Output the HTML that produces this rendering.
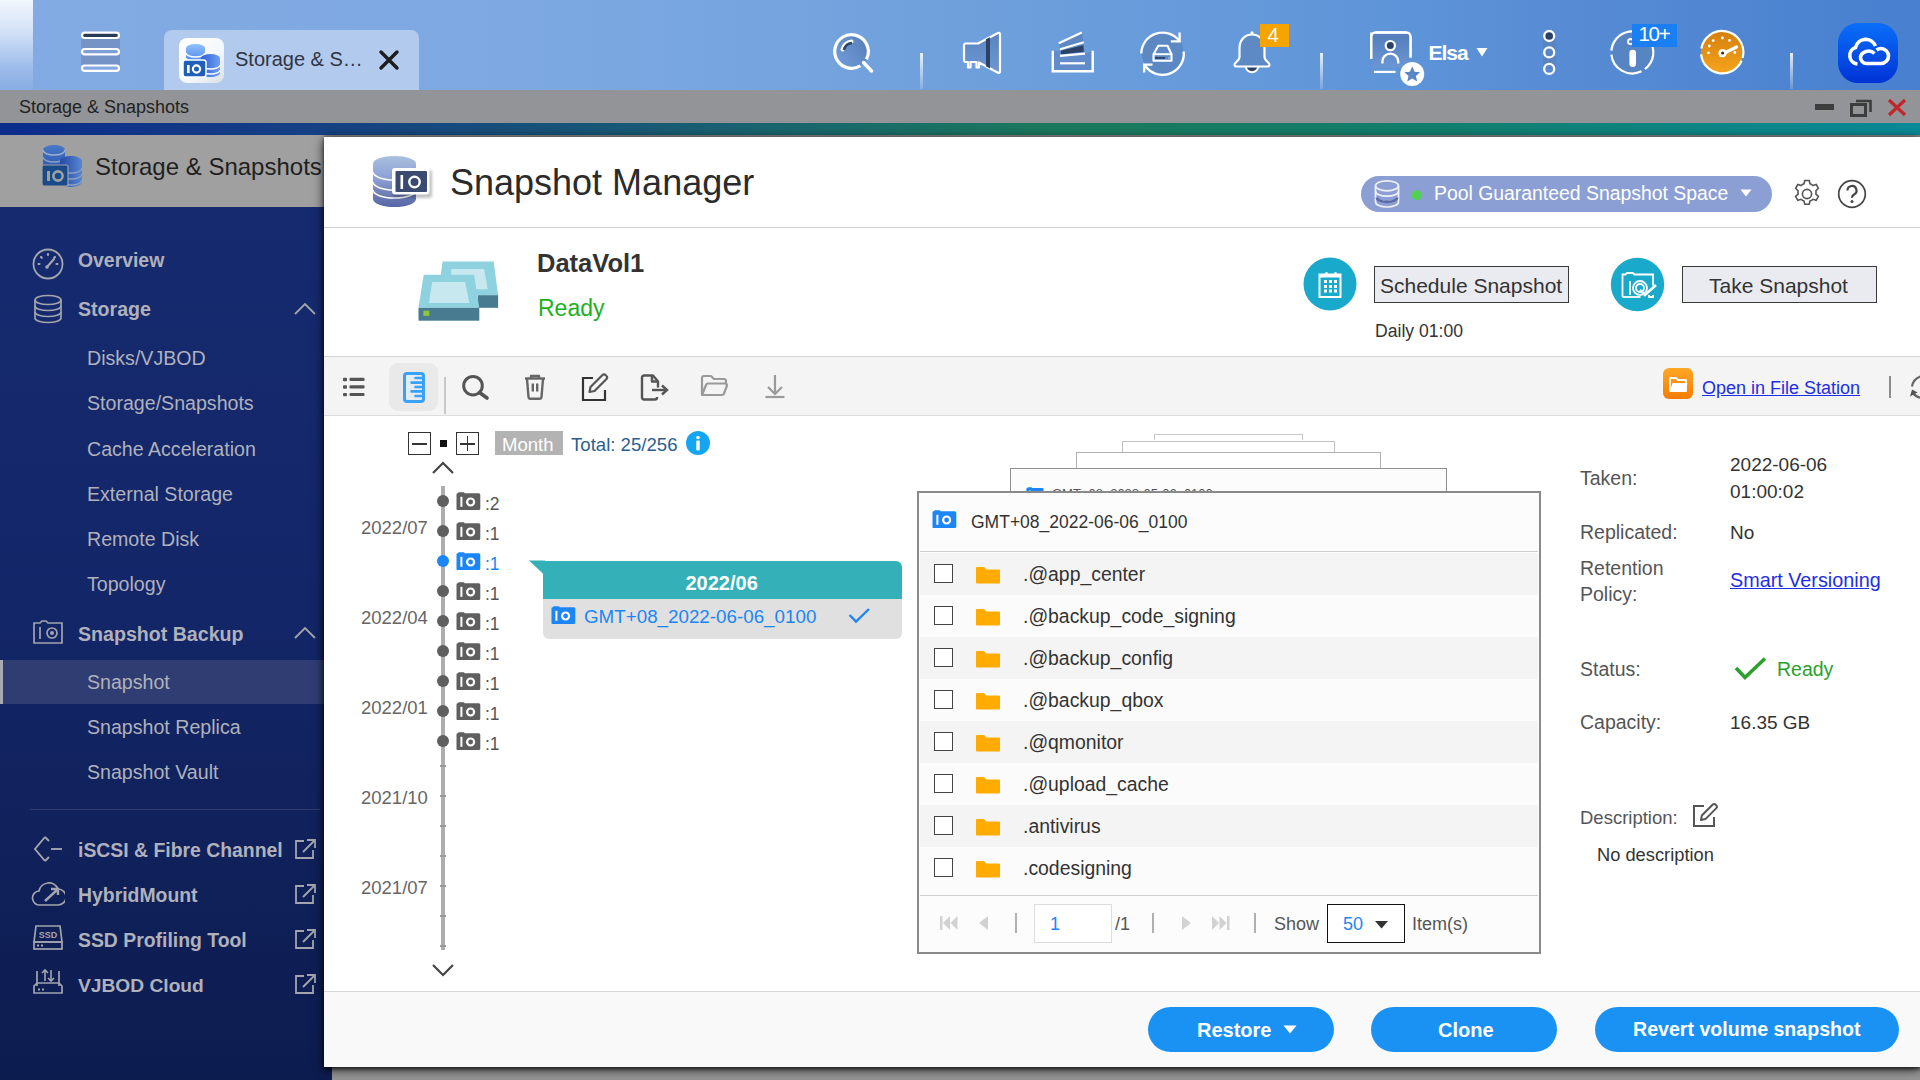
<!DOCTYPE html><html><head><meta charset="utf-8"><style>*{box-sizing:border-box;margin:0;padding:0}
html,body{width:1920px;height:1080px;overflow:hidden}
body{position:relative;background:#959595;font-family:"Liberation Sans",sans-serif;color:#333}
.a{position:absolute;display:block}
.t{position:absolute;white-space:nowrap;line-height:1}
</style></head><body>
<div class="a" style="left:0px;top:0px;width:1920px;height:90px;background:linear-gradient(90deg,#83aae3 0%,#7ca8e1 30%,#6fa0dc 50%,#6096d9 70%,#5489d3 85%,#4880cf 100%)"></div>
<div class="a" style="left:0px;top:0px;width:33px;height:90px;background:linear-gradient(180deg,#f2f6fd 0%,#d3e1f6 35%,#9dbcea 75%,#88ade4 100%)"></div>
<div class="a" style="left:0px;top:90px;width:1920px;height:33px;background:#929497"></div>
<div class="a" style="left:0px;top:123px;width:1920px;height:12px;background:linear-gradient(90deg,#0c2c8c 0%,#164383 18%,#1a6570 40%,#1b7a5c 55%,#12806f 75%,#0a8a98 100%)"></div>
<div class="a" style="left:0px;top:135px;width:324px;height:72px;background:#a0a0a0"></div>
<div class="a" style="left:324px;top:135px;width:1596px;height:2px;background:#8a8a8a"></div>
<div class="a" style="left:0px;top:207px;width:332px;height:873px;background:linear-gradient(180deg,#162a6f 0%,#132668 45%,#0d1c4f 100%)"></div>
<svg class="a" style="left:78px;top:28px;" width="46" height="48" viewBox="0 0 46 48">
<rect x="3" y="11" width="39" height="26" fill="#7390c2" opacity=".9"/>
<rect x="4" y="4.6" width="37" height="5.4" rx="2.7" fill="#2b3a58" stroke="#fff" stroke-width="2.2"/>
<rect x="4" y="21" width="37" height="5.4" rx="2.7" fill="#7d9fd6" stroke="#fff" stroke-width="2.2"/>
<rect x="4" y="37.5" width="37" height="5.4" rx="2.7" fill="#84a8e0" stroke="#fff" stroke-width="2.2"/>
</svg>
<div class="a" style="left:164px;top:30px;width:255px;height:60px;background:#b2caee;border-radius:8px 8px 0 0"></div>
<div class="a" style="left:179px;top:38px;width:45px;height:45px;background:linear-gradient(135deg,#ffffff 0%,#f4f7fb 60%,#d9e0e8 100%);border-radius:8px"></div>
<svg class="a" style="left:179px;top:38px;" width="45" height="45" viewBox="0 0 45 45">
<defs><linearGradient id="cy1" x1="0" y1="0" x2="0" y2="1"><stop offset="0" stop-color="#8fc0ff"/><stop offset="1" stop-color="#2f6fe0"/></linearGradient>
<linearGradient id="cy2" x1="0" y1="0" x2="1" y2="0"><stop offset="0" stop-color="#2e5fd8"/><stop offset="1" stop-color="#6fa0f0"/></linearGradient></defs>
<path d="M7 10 a9.5 4 0 0 1 19 0 v18 a9.5 4 0 0 1 -19 0z" fill="url(#cy1)"/>
<path d="M7 15 a9.5 4 0 0 0 19 0 M7 20 a9.5 4 0 0 0 19 0" stroke="#fff" stroke-width="1.5" fill="none"/>
<path d="M22 20 a9.5 4 0 0 1 19 0 v15 a9.5 4 0 0 1 -19 0z" fill="url(#cy2)"/>
<path d="M22 27 a9.5 4 0 0 0 19 0 M22 32 a9.5 4 0 0 0 19 0" stroke="#fff" stroke-width="1.3" fill="none"/>
<rect x="4" y="22" width="23" height="17" rx="2.5" fill="#1f5fb8" stroke="#fff" stroke-width="1.5"/>
<rect x="8" y="27" width="2.6" height="8" fill="#fff"/><circle cx="17.5" cy="31" r="3.6" fill="none" stroke="#fff" stroke-width="2.2"/>
</svg>
<div class="t" style="left:235.0px;top:48.5px;font-size:20px;color:#2f3540;font-weight:400;letter-spacing:0px">Storage &amp; S&hellip;</div>
<svg class="a" style="left:378px;top:49px;" width="22" height="22" viewBox="0 0 22 22"><path d="M3 3 L19 19 M19 3 L3 19" stroke="#1c1c1c" stroke-width="3.4" stroke-linecap="round"/></svg>
<svg class="a" style="left:828px;top:28px;" width="50" height="50" viewBox="0 0 50 50">
<defs><linearGradient id="sg" x1="0" y1="0" x2="0" y2="1"><stop offset="0" stop-color="#5a82bd"/><stop offset="1" stop-color="#6f9ad6"/></linearGradient></defs>
<circle cx="23.5" cy="23.5" r="16.8" fill="url(#sg)" stroke="#fff" stroke-width="3.2" stroke-dasharray="96 9.6" transform="rotate(58 23.5 23.5)"/>
<path d="M14.5 21.5 a10 10 0 0 1 9 -8" stroke="#fff" stroke-width="4" fill="none" stroke-linecap="round"/>
<path d="M16 22 a9 9 0 0 1 8 -7" stroke="#2d4365" stroke-width="2.6" fill="none"/>
<path d="M35.5 34.5 L43.5 43" stroke="#fff" stroke-width="3.4" stroke-linecap="round"/>
</svg>
<div class="a" style="left:919.5px;top:53px;width:3.0px;height:36px;background:linear-gradient(180deg,rgba(255,255,255,.85),rgba(255,255,255,.15))"></div>
<div class="a" style="left:1319.5px;top:53px;width:3.0px;height:36px;background:linear-gradient(180deg,rgba(255,255,255,.85),rgba(255,255,255,.15))"></div>
<div class="a" style="left:1789.5px;top:53px;width:3.0px;height:36px;background:linear-gradient(180deg,rgba(255,255,255,.85),rgba(255,255,255,.15))"></div>
<svg class="a" style="left:958px;top:28px;" width="48" height="50" viewBox="0 0 48 50">
<defs><linearGradient id="mg" x1="0" y1="0" x2="0" y2="1"><stop offset="0" stop-color="#5a84c0"/><stop offset="1" stop-color="#6d98d4"/></linearGradient></defs>
<path d="M8 15.5 h12 L40 5 a1.3 1.3 0 0 1 2 1.2 V43.5 a1.3 1.3 0 0 1 -2 1.2 L21 34.5 V39.5 H18.5 V34 H12.5 V39.5 H10 V34 H8 a2 2 0 0 1 -2 -2 V17.5 a2 2 0 0 1 2 -2z" fill="url(#mg)" stroke="#fff" stroke-width="2.2" stroke-linejoin="round"/>
<path d="M28 11.3 L32 9.2 V40.4 L28 38.3z" fill="#2b4165"/>
</svg>
<svg class="a" style="left:1048px;top:28px;" width="50" height="50" viewBox="0 0 50 50">
<path d="M13 22 L35.5 15 L37 25.5 L45 23 V43 H5 V23 L13 23z" fill="#5f8ac6" opacity=".85"/>
<path d="M11 15.5 L34 5 L35.5 14.5 L12 21.2z" fill="#5d88c4"/>
<path d="M4.8 22.8 V43.2 H44.7 V22.8" fill="none" stroke="#fff" stroke-width="2.4"/>
<path d="M12 35.3 H37" stroke="#fff" stroke-width="2.2"/>
<path d="M10.8 15.3 L33.8 4.5" stroke="#fff" stroke-width="2.2"/>
<path d="M12 21.3 L35.8 14.3" stroke="#fff" stroke-width="2.2"/>
<path d="M12.8 22.8 L35.3 17.3 L35.8 23.7 L13.2 26.3z" fill="#2b4165"/>
<path d="M12 27.8 L37 25.6" stroke="#fff" stroke-width="2.2"/>
</svg>
<svg class="a" style="left:1134px;top:28px;" width="56" height="50" viewBox="0 0 56 50">
<circle cx="28.5" cy="24.3" r="21" fill="#5c88c4"/>
<path d="M7.3 25.5 A21.2 21.2 0 0 1 45.6 13.3" fill="none" stroke="#fff" stroke-width="2.3"/>
<path d="M49.7 23.5 A21.2 21.2 0 0 1 11 37.5" fill="none" stroke="#fff" stroke-width="2.3"/>
<path d="M45.6 4.5 V13.3 H36.8" fill="none" stroke="#fff" stroke-width="2.3"/>
<path d="M10.2 44.5 V36.6 H18.5" fill="none" stroke="#fff" stroke-width="2.3"/>
<path d="M24.3 17.8 H33.5 L37.5 26.2 V32.8 H19.5 V26.2z" fill="none" stroke="#fff" stroke-width="2.1" stroke-linejoin="round"/>
<path d="M19.5 26.2 H37.5" stroke="#fff" stroke-width="2"/>
<rect x="21" y="29" width="10" height="1.8" fill="#2b4165"/><rect x="34" y="29" width="1.6" height="1.8" fill="#8fb0e0"/>
</svg>
<svg class="a" style="left:1228px;top:28px;" width="48" height="50" viewBox="0 0 48 50">
<path d="M17.8 38.5 a6.2 5.8 0 0 0 12.4 0" fill="#2b4165" stroke="#fff" stroke-width="2"/>
<path d="M11.5 20 c0 -8 5.5 -13.5 12.5 -13.5 c7 0 12.5 5.5 12.5 13.5 v9 c0 3 3.5 5 4.5 6.5 c1 1.5 .5 3 -1.5 3 h-31 c-2 0 -2.5 -1.5 -1.5 -3 c1 -1.5 4.5 -3.5 4.5 -6.5z" fill="#5d89c5" stroke="#fff" stroke-width="2.2" stroke-linejoin="round"/>
<circle cx="24" cy="4.8" r="1.6" fill="#fff"/>
</svg>
<div class="a" style="left:1260px;top:24px;width:29px;height:23px;background:#f6a400"></div>
<div class="t" style="left:1267.5px;top:24.6px;font-size:20.5px;color:#fff;font-weight:400;">4</div>
<svg class="a" style="left:1366px;top:28px;" width="62" height="62" viewBox="0 0 62 62">
<defs><linearGradient id="ug" x1="0" y1="0" x2="0" y2="1"><stop offset="0" stop-color="#557fbc"/><stop offset="1" stop-color="#6b97d4"/></linearGradient></defs>
<path d="M5.3 30.8 V8.5 a4 4 0 0 1 4 -4 H40.5 a4 4 0 0 1 4 4 V29.5" fill="url(#ug)" stroke="#fff" stroke-width="2.3"/>
<rect x="6.4" y="8" width="37" height="32" fill="url(#ug)"/>
<path d="M5.3 4.5 V30.8 M44.5 8 V29.5" stroke="#fff" stroke-width="2.3"/>
<path d="M9.5 4.5 H40.5" stroke="#fff" stroke-width="2.3"/>
<circle cx="24.3" cy="17.6" r="4.6" fill="#2b4165" stroke="#fff" stroke-width="2.2"/>
<path d="M16.4 35.5 v-2 a7.9 7.9 0 0 1 15.8 0 v2" fill="none" stroke="#fff" stroke-width="2.3"/>
<path d="M8 43.9 H29.6" stroke="#fff" stroke-width="2.2"/>
<circle cx="46.2" cy="46.1" r="12" fill="#fff"/>
<path d="M46.2 38.5 l2.4 5.2 5.5 .5 -4.2 3.7 1.3 5.5 -5 -3 -5 3 1.3 -5.5 -4.2 -3.7 5.5 -.5z" fill="#5a86c4"/>
</svg>
<div class="t" style="left:1428.5px;top:42.2px;font-size:21px;color:#fff;font-weight:700;letter-spacing:-1px">Elsa</div>
<svg class="a" style="left:1476px;top:47px;" width="12" height="10" viewBox="0 0 12 10"><path d="M0.5 1 h11 l-5.5 8.5z" fill="#fff"/></svg>
<div class="a" style="left:1543px;top:36px;width:13px;height:33px;background:#5985c2"></div>
<svg class="a" style="left:1539px;top:26px;" width="21" height="54" viewBox="0 0 21 54">
<circle cx="10.2" cy="10" r="5" fill="#2b4165" stroke="#fff" stroke-width="2.3"/>
<circle cx="10.2" cy="26.4" r="5" fill="#5a86c3" stroke="#fff" stroke-width="2.3"/>
<circle cx="10.2" cy="42.9" r="5" fill="none" stroke="#fff" stroke-width="2.3"/>
</svg>
<svg class="a" style="left:1606px;top:26px;" width="52" height="52" viewBox="0 0 52 52">
<circle cx="26.3" cy="26.4" r="21" fill="#5784c2"/>
<circle cx="26.3" cy="26.4" r="21" fill="none" stroke="#fff" stroke-width="2.2" stroke-dasharray="30 4 40 4 40 4 40"  transform="rotate(-150 26.3 26.4)"/>
<circle cx="24.6" cy="15.6" r="2.6" fill="none" stroke="#fff" stroke-width="1.8"/>
<rect x="23.4" y="23.7" width="6.6" height="17.4" rx="3.3" fill="#fff"/>
</svg>
<div class="a" style="left:1632px;top:24px;width:45px;height:23px;background:#1a7ff2"></div>
<div class="t" style="left:1638.5px;top:24.4px;font-size:20.5px;color:#fff;font-weight:400;letter-spacing:-1.3px">10+</div>
<svg class="a" style="left:1697px;top:27px;" width="52" height="52" viewBox="0 0 52 52">
<defs><linearGradient id="gg" x1="0" y1="0" x2="0" y2="1"><stop offset="0" stop-color="#d4800e"/><stop offset="1" stop-color="#f6a31c"/></linearGradient></defs>
<circle cx="25.2" cy="25.2" r="21.2" fill="url(#gg)"/>
<circle cx="25.2" cy="25.2" r="21.2" fill="none" stroke="#fff" stroke-width="2.2" stroke-dasharray="68.4 3 55.1 6.7" transform="rotate(-170 25.2 25.2)"/>
<path d="M23.5 28 L39.5 20" stroke="#fff" stroke-width="3.2" stroke-linecap="round"/>
<circle cx="25.6" cy="26.1" r="4.2" fill="#fff"/><circle cx="25.6" cy="26.1" r="1.5" fill="#3a2a10"/>
<g fill="#fff"><circle cx="11.5" cy="25.8" r="1.4"/><circle cx="12.3" cy="19" r="1.4"/><circle cx="16.2" cy="13.6" r="1.4"/><circle cx="25.4" cy="11" r="1.4"/><circle cx="32.5" cy="13.4" r="1.4"/><circle cx="37.8" cy="25.5" r="1.4"/></g>
</svg>
<div class="a" style="left:1838px;top:23px;width:60px;height:60px;background:linear-gradient(180deg,#0a6ff9,#0033d6);border-radius:20px"></div>
<svg class="a" style="left:1838px;top:23px;" width="60" height="59" viewBox="0 0 60 59">
<path d="M19.5 41 a8.5 8.5 0 0 1 -2 -16.5 a10.5 10.5 0 0 1 20 -1.5" fill="none" stroke="#fff" stroke-width="3.6"/>
<path d="M36.5 30.5 a8 7 0 0 0 -14 4 a6 6 0 0 0 6 6 h14.5 a7.5 7.5 0 0 0 0 -15 a7.5 7.5 0 0 0 -4.5 1.5" fill="none" stroke="#fff" stroke-width="3.6"/>
</svg>
<div class="t" style="left:19.0px;top:97.7px;font-size:18px;color:#222;font-weight:400;">Storage &amp; Snapshots</div>
<div class="a" style="left:1815px;top:104px;width:19px;height:6px;background:#3d3d3d"></div>
<svg class="a" style="left:1850px;top:98px;" width="23" height="19" viewBox="0 0 23 19"><rect x="1.5" y="6.5" width="14" height="11" fill="none" stroke="#3d3d3d" stroke-width="3"/><path d="M6 3 h14.5 v11" fill="none" stroke="#3d3d3d" stroke-width="2.6"/></svg>
<svg class="a" style="left:1886px;top:98px;" width="22" height="19" viewBox="0 0 22 19"><path d="M3 2 L19 17 M19 2 L3 17" stroke="#c0272d" stroke-width="3.2"/></svg>
<svg class="a" style="left:40px;top:142px;" width="46" height="46" viewBox="0 0 46 46">
<defs><linearGradient id="sb1" x1="0" y1="0" x2="0" y2="1"><stop offset="0" stop-color="#4a78c8"/><stop offset="1" stop-color="#1f4fa8"/></linearGradient>
<linearGradient id="sb2" x1="0" y1="0" x2="1" y2="0"><stop offset="0" stop-color="#2348a8"/><stop offset="1" stop-color="#5a86d0"/></linearGradient></defs>
<path d="M3 8 a11 5 0 0 1 22 0 v22 a11 5 0 0 1 -22 0z" fill="url(#sb1)"/>
<path d="M3 8 a11 5 0 0 0 22 0" fill="none" stroke="#9fb3cf" stroke-width="1.4"/>
<path d="M3 15 a11 5 0 0 0 22 0" fill="none" stroke="#8aa0c0" stroke-width="1.4"/>
<path d="M20 19 a11 5 0 0 1 22 0 v21 a11 5 0 0 1 -22 0z" fill="url(#sb2)"/>
<path d="M20 26 a11 5 0 0 0 22 0 M20 32 a11 5 0 0 0 22 0 M20 38 a11 5 0 0 0 22 0" fill="none" stroke="#8aa0c0" stroke-width="1.3"/>
<rect x="2" y="23" width="26" height="21" rx="2" fill="#184a8a" stroke="#a0a0a0" stroke-width="1.2"/>
<rect x="7" y="29" width="3" height="10" fill="#a0a0a0"/><circle cx="18" cy="34" r="4.6" fill="none" stroke="#a0a0a0" stroke-width="2.6"/>
</svg>
<div class="t" style="left:95.0px;top:154.6px;font-size:24px;color:#1f1f1f;font-weight:400;">Storage &amp; Snapshots</div>
<div class="t" style="left:78.0px;top:250.5px;font-size:19.4px;color:#afb1bb;font-weight:700;">Overview</div>
<svg class="a" style="left:31px;top:247px;" width="34" height="34" viewBox="0 0 34 34"><circle cx="17" cy="17" r="14.5" fill="none" stroke="#a3a5ad" stroke-width="1.8"/>
<g stroke="#a3a5ad" stroke-width="2.2" stroke-linecap="round"><path d="M7.5 17 h1 M10 10 l.8 .8 M17 7 v1 M24 10 l-.8 .8 M26.5 17 h-1"/><path d="M16 20 L23 12"/></g><circle cx="16" cy="20" r="1.8" fill="#a3a5ad"/></svg>
<div class="t" style="left:78.0px;top:300.3px;font-size:19.6px;color:#afb1bb;font-weight:700;">Storage</div>
<svg class="a" style="left:31px;top:293px;" width="34" height="32" viewBox="0 0 34 32"><g fill="none" stroke="#a3a5ad" stroke-width="1.7"><ellipse cx="17" cy="7" rx="13" ry="4.5"/><path d="M4 7 v18 a13 4.5 0 0 0 26 0 v-18"/><path d="M4 13 a13 4.5 0 0 0 26 0 M4 19 a13 4.5 0 0 0 26 0"/></g></svg>
<svg class="a" style="left:293px;top:301px;" width="24" height="16" viewBox="0 0 24 16"><path d="M2 13 L12 3 L22 13" fill="none" stroke="#a3a5ad" stroke-width="1.8"/></svg>
<div class="t" style="left:87.0px;top:349.1px;font-size:19.6px;color:#afb1bb;font-weight:400;">Disks/VJBOD</div>
<div class="t" style="left:87.0px;top:394.3px;font-size:19.6px;color:#afb1bb;font-weight:400;">Storage/Snapshots</div>
<div class="t" style="left:87.0px;top:439.5px;font-size:19.6px;color:#afb1bb;font-weight:400;">Cache Acceleration</div>
<div class="t" style="left:87.0px;top:484.7px;font-size:19.6px;color:#afb1bb;font-weight:400;">External Storage</div>
<div class="t" style="left:87.0px;top:529.9px;font-size:19.6px;color:#afb1bb;font-weight:400;">Remote Disk</div>
<div class="t" style="left:87.0px;top:575.1px;font-size:19.6px;color:#afb1bb;font-weight:400;">Topology</div>
<div class="t" style="left:78.0px;top:625.3px;font-size:19.6px;color:#afb1bb;font-weight:700;">Snapshot Backup</div>
<svg class="a" style="left:31px;top:619px;" width="34" height="28" viewBox="0 0 34 28"><g fill="none" stroke="#a3a5ad" stroke-width="1.7"><path d="M3 4 h6 l2 -2 h4 l2 2 h14 v20 h-28z"/><path d="M9 8 v12"/><circle cx="21" cy="14" r="5"/></g><circle cx="21" cy="14" r="2" fill="#a3a5ad"/></svg>
<svg class="a" style="left:293px;top:625px;" width="24" height="16" viewBox="0 0 24 16"><path d="M2 13 L12 3 L22 13" fill="none" stroke="#a3a5ad" stroke-width="1.8"/></svg>
<div class="a" style="left:0px;top:660px;width:324px;height:44px;background:#2f3d72"></div>
<div class="a" style="left:0px;top:660px;width:3px;height:44px;background:#a9abb3"></div>
<div class="t" style="left:87.0px;top:673.1px;font-size:19.6px;color:#afb1bb;font-weight:400;">Snapshot</div>
<div class="t" style="left:87.0px;top:718.1px;font-size:19.6px;color:#afb1bb;font-weight:400;">Snapshot Replica</div>
<div class="t" style="left:87.0px;top:763.1px;font-size:19.6px;color:#afb1bb;font-weight:400;">Snapshot Vault</div>
<div class="a" style="left:30px;top:809px;width:290px;height:1px;background:#2e3c6c"></div>
<div class="t" style="left:78.0px;top:840.5px;font-size:19.4px;color:#afb1bb;font-weight:700;">iSCSI &amp; Fibre Channel</div>
<svg class="a" style="left:31px;top:833px;" width="34" height="32" viewBox="0 0 34 32"><g fill="none" stroke="#a3a5ad" stroke-width="1.9"><path d="M14 4 L4 16 L14 28"/><path d="M14 4 l4 4 M14 28 l4 -4"/><path d="M20 16 h11"/></g></svg>
<div class="t" style="left:78.0px;top:885.5px;font-size:19.4px;color:#afb1bb;font-weight:700;">HybridMount</div>
<svg class="a" style="left:31px;top:879px;" width="34" height="30" viewBox="0 0 34 30"><g fill="none" stroke="#a3a5ad" stroke-width="1.7"><path d="M9 26 a7 7 0 0 1 -1 -14 a10 10 0 0 1 19 -2 a8 8 0 0 1 0 16z"/></g><path d="M14 22 L26 11 M20 10 h7 v6" stroke="#a3a5ad" stroke-width="2.4" fill="none"/></svg>
<div class="t" style="left:78.0px;top:930.5px;font-size:19.4px;color:#afb1bb;font-weight:700;">SSD Profiling Tool</div>
<svg class="a" style="left:31px;top:923px;" width="34" height="30" viewBox="0 0 34 30"><g fill="none" stroke="#a3a5ad" stroke-width="1.7"><path d="M5 3 h24 l2 16 h-28z"/><rect x="3" y="19" width="28" height="7"/></g><text x="17" y="15" font-size="9" font-family="Liberation Sans" font-weight="700" fill="#a3a5ad" text-anchor="middle">SSD</text><g fill="#a3a5ad"><rect x="6" y="21.5" width="2" height="2"/><rect x="10" y="21.5" width="2" height="2"/></g></svg>
<div class="t" style="left:78.0px;top:975.7px;font-size:19.2px;color:#afb1bb;font-weight:700;">VJBOD Cloud</div>
<svg class="a" style="left:31px;top:967px;" width="34" height="30" viewBox="0 0 34 30"><g fill="none" stroke="#a3a5ad" stroke-width="1.7"><path d="M6 4 v15 M28 4 v15 M3 19 l3 -3 h22 l3 3 v7 h-28z"/></g><path d="M14 3 v11 M11 6 l3 -3 3 3 M20 14 v-11 M17 11 l3 3 3 -3" stroke="#a3a5ad" stroke-width="1.6" fill="none"/><g fill="#a3a5ad"><rect x="7" y="21.5" width="2" height="2"/><rect x="11" y="21.5" width="2" height="2"/></g></svg>
<svg class="a" style="left:294px;top:838px;" width="24" height="22" viewBox="0 0 24 22"><g fill="none" stroke="#a3a5ad" stroke-width="1.8"><path d="M10 3 h-8 v17 h17 v-8"/><path d="M13 2 h8 v8 M21 2 L9 14"/></g></svg>
<svg class="a" style="left:294px;top:883px;" width="24" height="22" viewBox="0 0 24 22"><g fill="none" stroke="#a3a5ad" stroke-width="1.8"><path d="M10 3 h-8 v17 h17 v-8"/><path d="M13 2 h8 v8 M21 2 L9 14"/></g></svg>
<svg class="a" style="left:294px;top:928px;" width="24" height="22" viewBox="0 0 24 22"><g fill="none" stroke="#a3a5ad" stroke-width="1.8"><path d="M10 3 h-8 v17 h17 v-8"/><path d="M13 2 h8 v8 M21 2 L9 14"/></g></svg>
<svg class="a" style="left:294px;top:973px;" width="24" height="22" viewBox="0 0 24 22"><g fill="none" stroke="#a3a5ad" stroke-width="1.8"><path d="M10 3 h-8 v17 h17 v-8"/><path d="M13 2 h8 v8 M21 2 L9 14"/></g></svg>
<div class="a" style="left:324px;top:137px;width:1596px;height:930px;background:#fff;box-shadow:0 2px 3px rgba(0,0,0,.5),0 2px 10px rgba(0,0,0,.85)"></div>
<svg class="a" style="left:368px;top:150px;" width="72" height="64" viewBox="0 0 72 64">
<defs><linearGradient id="hc" x1="0" y1="0" x2="0" y2="1"><stop offset="0" stop-color="#a9c0de"/><stop offset=".45" stop-color="#8c9fd6"/><stop offset=".7" stop-color="#7283b8"/><stop offset="1" stop-color="#5767a8"/></linearGradient>
<filter id="sh" x="-30%" y="-30%" width="160%" height="160%"><feGaussianBlur stdDeviation="1.5"/></filter></defs>
<path d="M5 14 a21.5 8 0 0 1 43 0 v35 a21.5 8 0 0 1 -43 0z" fill="url(#hc)"/>
<path d="M5 22 a21.5 8 0 0 0 43 0" fill="none" stroke="#fff" stroke-width="1.6"/>
<path d="M5 32 a21.5 8 0 0 0 43 0" fill="none" stroke="#fff" stroke-width="1.6"/>
<path d="M5 40 a21.5 8 0 0 0 43 0" fill="none" stroke="#fff" stroke-width="1.6"/>
<rect x="25" y="20" width="39" height="28" rx="3" fill="#000" opacity=".25" filter="url(#sh)"/>
<rect x="24" y="18" width="37.5" height="26.5" rx="3" fill="#fff"/>
<rect x="27.5" y="21" width="31.5" height="21" rx="1" fill="#3a4a70"/>
<rect x="32.5" y="25" width="2.6" height="14" fill="#fff"/><circle cx="46.5" cy="32" r="5.2" fill="none" stroke="#fff" stroke-width="2.4"/>
</svg>
<div class="t" style="left:450.0px;top:164.9px;font-size:36px;color:#2b2b2b;font-weight:400;">Snapshot Manager</div>
<div class="a" style="left:1361px;top:176px;width:411px;height:36px;background:#8c9fd4;border-radius:18px"></div>
<svg class="a" style="left:1372px;top:178px;" width="30" height="32" viewBox="0 0 30 32"><g fill="none" stroke="#eef1fb" stroke-width="1.7"><ellipse cx="15" cy="7.8" rx="11.5" ry="5"/><path d="M3.5 7.8 V24 M26.5 7.8 V24"/>
<path d="M3.5 13.2 a11.5 5 0 0 0 23 0 M3.5 18.8 a11.5 5 0 0 0 23 0 M3.5 24 a11.5 5 0 0 0 23 0"/></g>
<path d="M4.8 19.5 a10.2 4.4 0 0 0 20.4 0" fill="none" stroke="#5b69a9" stroke-width="2.6"/></svg>
<svg class="a" style="left:1411px;top:189px;" width="12" height="12" viewBox="0 0 12 12"><circle cx="5.7" cy="6.3" r="5" fill="#52d052"/></svg>
<div class="t" style="left:1434.0px;top:183.5px;font-size:19.4px;color:#fff;font-weight:400;">Pool Guaranteed Snapshot Space</div>
<svg class="a" style="left:1740px;top:189px;" width="12" height="9" viewBox="0 0 12 9"><path d="M0.5 0.5 h11 l-5.5 7z" fill="#fff"/></svg>
<svg class="a" style="left:1791px;top:178px;" width="32" height="32" viewBox="0 0 32 32"><g transform="translate(16,16)" fill="none" stroke="#555" stroke-width="1.6">
<path d="M-2.2 -13.5 h4.4 l.8 3.3 a10 10 0 0 1 2.9 1.7 l3.3 -1 2.2 3.8 -2.5 2.4 a10 10 0 0 1 0 3.4 l2.5 2.4 -2.2 3.8 -3.3 -1 a10 10 0 0 1 -2.9 1.7 l-.8 3.3 h-4.4 l-.8 -3.3 a10 10 0 0 1 -2.9 -1.7 l-3.3 1 -2.2 -3.8 2.5 -2.4 a10 10 0 0 1 0 -3.4 l-2.5 -2.4 2.2 -3.8 3.3 1 a10 10 0 0 1 2.9 -1.7z"/>
<circle r="4.6"/></g></svg>
<svg class="a" style="left:1836px;top:178px;" width="32" height="32" viewBox="0 0 32 32"><circle cx="16" cy="16" r="13.3" fill="none" stroke="#444" stroke-width="1.7"/>
<path d="M11.5 12.5 a4.5 4.5 0 1 1 6.5 4 c-1.5 .8 -2 1.6 -2 3.3" fill="none" stroke="#444" stroke-width="2.2"/><circle cx="16" cy="23.5" r="1.5" fill="#444"/></svg>
<div class="a" style="left:324px;top:227px;width:1596px;height:1px;background:#cfcfcf"></div>
<svg class="a" style="left:414px;top:256px;" width="90" height="70" viewBox="0 0 90 70">
<path d="M28.6 5.5 H79.7 L84.1 39.2 H24z" fill="#8ed1df"/>
<path d="M37.1 12.9 H70 L73.8 33.3 H37.1z" fill="#c8e8ef"/>
<rect x="63.8" y="39.2" width="20.3" height="12.6" fill="#497b90"/>
<path d="M9.7 18.8 H60.1 L65.3 51.8 H4.5z" fill="#8ed1df"/>
<path d="M18.2 25.9 H51.2 L55.3 47 H14.9z" fill="#c8e8ef"/>
<rect x="4.5" y="51.8" width="60.8" height="12.9" fill="#497b90"/>
<rect x="9.3" y="54.7" width="6" height="5.2" fill="#8cc63f"/>
</svg>
<div class="t" style="left:537.0px;top:250.8px;font-size:25.5px;color:#333;font-weight:700;">DataVol1</div>
<div class="t" style="left:538.0px;top:297.4px;font-size:23px;color:#1db11d;font-weight:400;">Ready</div>
<svg class="a" style="left:1303px;top:257px;" width="54" height="54" viewBox="0 0 54 54"><circle cx="27" cy="27" r="26.5" fill="#19aacb"/>
<rect x="16.5" y="17.5" width="21" height="22.5" fill="none" stroke="#fff" stroke-width="2"/>
<path d="M16.5 19 h21" stroke="#fff" stroke-width="3"/>
<g fill="#fff"><rect x="21" y="23" width="3" height="3"/><rect x="26" y="23" width="3" height="3"/><rect x="31" y="23" width="3" height="3"/>
<rect x="21" y="28" width="3" height="3"/><rect x="26" y="28" width="3" height="3"/><rect x="31" y="28" width="3" height="3"/>
<rect x="21" y="32.5" width="3" height="3"/><rect x="26" y="32.5" width="3" height="3"/><rect x="31" y="32.5" width="3" height="3"/>
<circle cx="23.5" cy="16.5" r="1.5"/><circle cx="32.5" cy="16.5" r="1.5"/></g></svg>
<div class="a" style="left:1374px;top:266px;width:195px;height:37px;background:#e9ebf0;border:1.6px solid #3a3a3a"></div>
<div class="t" style="left:1380.0px;top:274.8px;font-size:21px;color:#333;font-weight:400;">Schedule Snapshot</div>
<div class="t" style="left:1375.0px;top:322.7px;font-size:17.6px;color:#333;font-weight:400;">Daily 01:00</div>
<svg class="a" style="left:1610px;top:257px;" width="55" height="55" viewBox="0 0 55 55"><circle cx="27.5" cy="27.5" r="26.7" fill="#19aacb"/>
<g fill="none" stroke="#fff" stroke-width="1.8"><path d="M12.5 40 v-22.5 h3 l1.5 -1.5 h6 l1.5 1.5 h18.5 v11"/><path d="M12.5 40 h18"/><path d="M39 38 v2 h4 v-2"/>
<path d="M20 24 v14"/><circle cx="30" cy="31" r="7"/><circle cx="30" cy="31" r="4"/></g>
<path d="M30 33 l5 5 l11 -10" fill="none" stroke="#fff" stroke-width="2.6"/></svg>
<div class="a" style="left:1682px;top:266px;width:195px;height:37px;background:#e9ebf0;border:1.6px solid #3a3a3a"></div>
<div class="t" style="left:1709.0px;top:274.8px;font-size:21px;color:#333;font-weight:400;">Take Snapshot</div>
<div class="a" style="left:324px;top:356px;width:1596px;height:1px;background:#d6d6d6"></div>
<div class="a" style="left:324px;top:357px;width:1596px;height:58px;background:#f4f4f4"></div>
<div class="a" style="left:324px;top:415px;width:1596px;height:1px;background:#dcdcdc"></div>
<svg class="a" style="left:340px;top:372px;" width="28" height="28" viewBox="0 0 28 28"><g fill="#555"><rect x="3" y="5.8" width="4" height="3.4" rx="1"/><rect x="3" y="13.3" width="4" height="3.4" rx="1"/><rect x="3" y="20.9" width="4" height="3.4" rx="1"/>
<rect x="9.5" y="5.8" width="15" height="3.2" rx="1"/><rect x="9.5" y="13.3" width="15" height="3.2" rx="1"/><rect x="9.5" y="20.9" width="15" height="3.2" rx="1"/></g></svg>
<div class="a" style="left:389px;top:363px;width:49px;height:48px;background:#e9e9e9;border-radius:9px"></div>
<svg class="a" style="left:400px;top:369px;" width="28" height="36" viewBox="0 0 28 36"><rect x="4.5" y="4.5" width="19" height="28" rx="2.5" fill="#e2ecf6" stroke="#3aa2f6" stroke-width="3"/>
<g stroke="#3aa2f6" stroke-width="2.6" stroke-linecap="round"><path d="M15.5 9 h7 M11.5 13.6 h11 M15.5 18 h7 M11.5 22.4 h11 M15.5 27 h7"/></g></svg>
<div class="a" style="left:444px;top:377px;width:2px;height:37px;background:#c9c9c9"></div>
<svg class="a" style="left:458px;top:372px;" width="34" height="30" viewBox="0 0 34 30"><circle cx="15" cy="13.7" r="9.3" fill="none" stroke="#555" stroke-width="3"/><path d="M21.5 20.5 L29 26" stroke="#555" stroke-width="3.6" stroke-linecap="round"/></svg>
<svg class="a" style="left:520px;top:372px;" width="30" height="30" viewBox="0 0 30 30"><g fill="none" stroke="#666" stroke-width="2.4" stroke-linejoin="round"><path d="M5 6.5 h20"/><path d="M11 6.5 v-2.5 h8 v2.5"/><path d="M7 7 l1.5 18 a2 2 0 0 0 2 1.8 h9 a2 2 0 0 0 2 -1.8 l1.5 -18"/></g>
<g stroke="#666" stroke-width="2.4"><path d="M12.8 11.5 v8 M17.2 11.5 v8"/></g></svg>
<svg class="a" style="left:578px;top:372px;" width="34" height="32" viewBox="0 0 34 32"><path d="M15 6 h-10 v22 h22 v-10" fill="none" stroke="#333" stroke-width="2.2"/>
<path d="M11.5 20 l1 -5 l12 -12 a2 2 0 0 1 3 0 l1 1 a2 2 0 0 1 0 3 l-12 12z" fill="none" stroke="#555" stroke-width="2.2" stroke-linejoin="round"/></svg>
<svg class="a" style="left:638px;top:372px;" width="34" height="30" viewBox="0 0 34 30"><g fill="none" stroke="#555" stroke-width="2.4" stroke-linejoin="round"><path d="M19 25 v.5 a2 2 0 0 1 -2 2 h-11 a2 2 0 0 1 -2 -2 v-20 a2 2 0 0 1 2 -2 h9 l5 6 v6"/><path d="M14 3.5 v6 h6"/></g>
<path d="M14 18 h13" stroke="#555" stroke-width="2.4"/><path d="M24 13.5 l5 4.5 l-5 4.5" fill="none" stroke="#555" stroke-width="2.4"/></svg>
<svg class="a" style="left:698px;top:372px;" width="34" height="28" viewBox="0 0 34 28"><path d="M4 23 v-17 a2 2 0 0 1 2 -2 h7 l3 3 h10 a2 2 0 0 1 2 2 v2 M4 23 l4 -10 a2 2 0 0 1 2 -1.5 h17 a2 2 0 0 1 2 2 l-3 8 a2 2 0 0 1 -2 1.5 h-20z" fill="none" stroke="#9a9a9a" stroke-width="2.2" stroke-linejoin="round"/></svg>
<svg class="a" style="left:762px;top:372px;" width="26" height="30" viewBox="0 0 26 30"><g fill="none" stroke="#9a9a9a" stroke-width="2.2"><path d="M13 3 v19 M6 15 l7 7 l7 -7"/><path d="M3.5 25 h19"/></g></svg>
<div class="a" style="left:1663px;top:368px;width:30px;height:31px;background:linear-gradient(180deg,#ffa726,#f57c00);border-radius:6px"></div>
<svg class="a" style="left:1663px;top:368px;" width="30" height="31" viewBox="0 0 30 31"><path d="M7 23 v-13 h6 l2 2 h8 v11z" fill="none" stroke="#fff" stroke-width="1.8" stroke-linejoin="round"/><path d="M7 23 l2.5 -8 h15 l-2 8z" fill="#fff"/></svg>
<div class="t" style="left:1702.0px;top:379.2px;font-size:18px;color:#1e2ee6;font-weight:400;text-decoration-thickness:1px"><u>Open in File Station</u></div>
<div class="a" style="left:1889px;top:376px;width:1.5px;height:22px;background:#8c8c8c"></div>
<svg class="a" style="left:1900px;top:370px;" width="20" height="36" viewBox="0 0 20 36"><path d="M12 16.5 A13 13 0 0 1 21 6.3" fill="none" stroke="#666" stroke-width="2.2"/><path d="M13.5 23.5 A11 11 0 0 0 21 27.8" fill="none" stroke="#666" stroke-width="2.4"/><path d="M10 26.5 L12 19.6 L17.6 22.5z" fill="#555"/></svg>
<div class="a" style="left:408px;top:432px;width:23px;height:23px;border:1.6px solid #333"></div>
<div class="a" style="left:412px;top:443px;width:15px;height:1.6000000000000227px;background:#333"></div>
<div class="a" style="left:440px;top:440px;width:7px;height:7px;background:#111"></div>
<div class="a" style="left:456px;top:432px;width:23px;height:23px;border:1.6px solid #333"></div>
<div class="a" style="left:460px;top:443px;width:15px;height:1.6000000000000227px;background:#333"></div>
<div class="a" style="left:466.8px;top:436px;width:1.599999999999966px;height:15px;background:#333"></div>
<div class="a" style="left:495px;top:431px;width:68px;height:24px;background:#b3b3b3"></div>
<div class="t" style="left:502.0px;top:435.8px;font-size:18.5px;color:#fff;font-weight:400;">Month</div>
<div class="t" style="left:571.0px;top:435.7px;font-size:18.6px;color:#2a5f90;font-weight:400;">Total: 25/256</div>
<svg class="a" style="left:686px;top:431px;" width="25" height="25" viewBox="0 0 25 25"><circle cx="12" cy="12" r="12" fill="#16a6f1"/><circle cx="12" cy="6.5" r="1.8" fill="#fff"/><rect x="10.3" y="9.5" width="3.4" height="10" rx="1" fill="#fff"/></svg>
<svg class="a" style="left:430px;top:459px;" width="26" height="18" viewBox="0 0 26 18"><path d="M3 14 L13 4 L23 14" fill="none" stroke="#444" stroke-width="2.2"/></svg>
<svg class="a" style="left:430px;top:961px;" width="26" height="18" viewBox="0 0 26 18"><path d="M3 4 L13 14 L23 4" fill="none" stroke="#444" stroke-width="2.2"/></svg>
<div class="a" style="left:441px;top:486px;width:3.5px;height:464px;background:#adadad"></div>
<div class="a" style="left:439.5px;top:764.6px;width:6.5px;height:2.0px;background:#999"></div>
<div class="a" style="left:439.5px;top:794.6px;width:6.5px;height:2.0px;background:#999"></div>
<div class="a" style="left:439.5px;top:824.6px;width:6.5px;height:2.0px;background:#999"></div>
<div class="a" style="left:439.5px;top:854.6px;width:6.5px;height:2.0px;background:#999"></div>
<div class="a" style="left:439.5px;top:884.6px;width:6.5px;height:2.0px;background:#999"></div>
<div class="a" style="left:439.5px;top:914.6px;width:6.5px;height:2.0px;background:#999"></div>
<div class="a" style="left:439.5px;top:944.6px;width:6.5px;height:2.0px;background:#999"></div>
<svg class="a" style="left:436.5px;top:495px;" width="12" height="12" viewBox="0 0 12 12"><circle cx="6" cy="6" r="6" fill="#5f5f5f"/></svg>
<svg class="a" style="left:456px;top:492px;" width="25" height="19" viewBox="0 0 25 19"><path d="M0.5 2.5 a1.2 1.2 0 0 1 1.2 -1.2 h0.3 a1 1 0 0 1 1 -1 h4.5 a1 1 0 0 1 1 1 h14.3 a1.5 1.5 0 0 1 1.5 1.5 v13.8 a1.5 1.5 0 0 1 -1.5 1.5 h-21.1 a1.2 1.2 0 0 1 -1.2 -1.2z" fill="#5f5f5f"/>
<rect x="4.4" y="4.8" width="2" height="10" fill="#fff"/><circle cx="14.6" cy="10" r="3.5" fill="none" stroke="#fff" stroke-width="2.2"/></svg>
<div class="t" style="left:485.0px;top:496.1px;font-size:17.5px;color:#555;font-weight:400;">:2</div>
<svg class="a" style="left:436.5px;top:525px;" width="12" height="12" viewBox="0 0 12 12"><circle cx="6" cy="6" r="6" fill="#5f5f5f"/></svg>
<svg class="a" style="left:456px;top:522px;" width="25" height="19" viewBox="0 0 25 19"><path d="M0.5 2.5 a1.2 1.2 0 0 1 1.2 -1.2 h0.3 a1 1 0 0 1 1 -1 h4.5 a1 1 0 0 1 1 1 h14.3 a1.5 1.5 0 0 1 1.5 1.5 v13.8 a1.5 1.5 0 0 1 -1.5 1.5 h-21.1 a1.2 1.2 0 0 1 -1.2 -1.2z" fill="#5f5f5f"/>
<rect x="4.4" y="4.8" width="2" height="10" fill="#fff"/><circle cx="14.6" cy="10" r="3.5" fill="none" stroke="#fff" stroke-width="2.2"/></svg>
<div class="t" style="left:485.0px;top:526.1px;font-size:17.5px;color:#555;font-weight:400;">:1</div>
<svg class="a" style="left:436.5px;top:555px;" width="12" height="12" viewBox="0 0 12 12"><circle cx="6" cy="6" r="6" fill="#1c86f7"/></svg>
<svg class="a" style="left:456px;top:552px;" width="25" height="19" viewBox="0 0 25 19"><path d="M0.5 2.5 a1.2 1.2 0 0 1 1.2 -1.2 h0.3 a1 1 0 0 1 1 -1 h4.5 a1 1 0 0 1 1 1 h14.3 a1.5 1.5 0 0 1 1.5 1.5 v13.8 a1.5 1.5 0 0 1 -1.5 1.5 h-21.1 a1.2 1.2 0 0 1 -1.2 -1.2z" fill="#1c86f7"/>
<rect x="4.4" y="4.8" width="2" height="10" fill="#fff"/><circle cx="14.6" cy="10" r="3.5" fill="none" stroke="#fff" stroke-width="2.2"/></svg>
<div class="t" style="left:485.0px;top:556.1px;font-size:17.5px;color:#1c86f7;font-weight:400;">:1</div>
<svg class="a" style="left:436.5px;top:585px;" width="12" height="12" viewBox="0 0 12 12"><circle cx="6" cy="6" r="6" fill="#5f5f5f"/></svg>
<svg class="a" style="left:456px;top:582px;" width="25" height="19" viewBox="0 0 25 19"><path d="M0.5 2.5 a1.2 1.2 0 0 1 1.2 -1.2 h0.3 a1 1 0 0 1 1 -1 h4.5 a1 1 0 0 1 1 1 h14.3 a1.5 1.5 0 0 1 1.5 1.5 v13.8 a1.5 1.5 0 0 1 -1.5 1.5 h-21.1 a1.2 1.2 0 0 1 -1.2 -1.2z" fill="#5f5f5f"/>
<rect x="4.4" y="4.8" width="2" height="10" fill="#fff"/><circle cx="14.6" cy="10" r="3.5" fill="none" stroke="#fff" stroke-width="2.2"/></svg>
<div class="t" style="left:485.0px;top:586.1px;font-size:17.5px;color:#555;font-weight:400;">:1</div>
<svg class="a" style="left:436.5px;top:615px;" width="12" height="12" viewBox="0 0 12 12"><circle cx="6" cy="6" r="6" fill="#5f5f5f"/></svg>
<svg class="a" style="left:456px;top:612px;" width="25" height="19" viewBox="0 0 25 19"><path d="M0.5 2.5 a1.2 1.2 0 0 1 1.2 -1.2 h0.3 a1 1 0 0 1 1 -1 h4.5 a1 1 0 0 1 1 1 h14.3 a1.5 1.5 0 0 1 1.5 1.5 v13.8 a1.5 1.5 0 0 1 -1.5 1.5 h-21.1 a1.2 1.2 0 0 1 -1.2 -1.2z" fill="#5f5f5f"/>
<rect x="4.4" y="4.8" width="2" height="10" fill="#fff"/><circle cx="14.6" cy="10" r="3.5" fill="none" stroke="#fff" stroke-width="2.2"/></svg>
<div class="t" style="left:485.0px;top:616.1px;font-size:17.5px;color:#555;font-weight:400;">:1</div>
<svg class="a" style="left:436.5px;top:645px;" width="12" height="12" viewBox="0 0 12 12"><circle cx="6" cy="6" r="6" fill="#5f5f5f"/></svg>
<svg class="a" style="left:456px;top:642px;" width="25" height="19" viewBox="0 0 25 19"><path d="M0.5 2.5 a1.2 1.2 0 0 1 1.2 -1.2 h0.3 a1 1 0 0 1 1 -1 h4.5 a1 1 0 0 1 1 1 h14.3 a1.5 1.5 0 0 1 1.5 1.5 v13.8 a1.5 1.5 0 0 1 -1.5 1.5 h-21.1 a1.2 1.2 0 0 1 -1.2 -1.2z" fill="#5f5f5f"/>
<rect x="4.4" y="4.8" width="2" height="10" fill="#fff"/><circle cx="14.6" cy="10" r="3.5" fill="none" stroke="#fff" stroke-width="2.2"/></svg>
<div class="t" style="left:485.0px;top:646.1px;font-size:17.5px;color:#555;font-weight:400;">:1</div>
<svg class="a" style="left:436.5px;top:675px;" width="12" height="12" viewBox="0 0 12 12"><circle cx="6" cy="6" r="6" fill="#5f5f5f"/></svg>
<svg class="a" style="left:456px;top:672px;" width="25" height="19" viewBox="0 0 25 19"><path d="M0.5 2.5 a1.2 1.2 0 0 1 1.2 -1.2 h0.3 a1 1 0 0 1 1 -1 h4.5 a1 1 0 0 1 1 1 h14.3 a1.5 1.5 0 0 1 1.5 1.5 v13.8 a1.5 1.5 0 0 1 -1.5 1.5 h-21.1 a1.2 1.2 0 0 1 -1.2 -1.2z" fill="#5f5f5f"/>
<rect x="4.4" y="4.8" width="2" height="10" fill="#fff"/><circle cx="14.6" cy="10" r="3.5" fill="none" stroke="#fff" stroke-width="2.2"/></svg>
<div class="t" style="left:485.0px;top:676.1px;font-size:17.5px;color:#555;font-weight:400;">:1</div>
<svg class="a" style="left:436.5px;top:705px;" width="12" height="12" viewBox="0 0 12 12"><circle cx="6" cy="6" r="6" fill="#5f5f5f"/></svg>
<svg class="a" style="left:456px;top:702px;" width="25" height="19" viewBox="0 0 25 19"><path d="M0.5 2.5 a1.2 1.2 0 0 1 1.2 -1.2 h0.3 a1 1 0 0 1 1 -1 h4.5 a1 1 0 0 1 1 1 h14.3 a1.5 1.5 0 0 1 1.5 1.5 v13.8 a1.5 1.5 0 0 1 -1.5 1.5 h-21.1 a1.2 1.2 0 0 1 -1.2 -1.2z" fill="#5f5f5f"/>
<rect x="4.4" y="4.8" width="2" height="10" fill="#fff"/><circle cx="14.6" cy="10" r="3.5" fill="none" stroke="#fff" stroke-width="2.2"/></svg>
<div class="t" style="left:485.0px;top:706.1px;font-size:17.5px;color:#555;font-weight:400;">:1</div>
<svg class="a" style="left:436.5px;top:735px;" width="12" height="12" viewBox="0 0 12 12"><circle cx="6" cy="6" r="6" fill="#5f5f5f"/></svg>
<svg class="a" style="left:456px;top:732px;" width="25" height="19" viewBox="0 0 25 19"><path d="M0.5 2.5 a1.2 1.2 0 0 1 1.2 -1.2 h0.3 a1 1 0 0 1 1 -1 h4.5 a1 1 0 0 1 1 1 h14.3 a1.5 1.5 0 0 1 1.5 1.5 v13.8 a1.5 1.5 0 0 1 -1.5 1.5 h-21.1 a1.2 1.2 0 0 1 -1.2 -1.2z" fill="#5f5f5f"/>
<rect x="4.4" y="4.8" width="2" height="10" fill="#fff"/><circle cx="14.6" cy="10" r="3.5" fill="none" stroke="#fff" stroke-width="2.2"/></svg>
<div class="t" style="left:485.0px;top:736.1px;font-size:17.5px;color:#555;font-weight:400;">:1</div>
<div class="t" style="left:361.0px;top:519.3px;font-size:18.5px;color:#666;font-weight:400;">2022/07</div>
<div class="t" style="left:361.0px;top:609.3px;font-size:18.5px;color:#666;font-weight:400;">2022/04</div>
<div class="t" style="left:361.0px;top:699.3px;font-size:18.5px;color:#666;font-weight:400;">2022/01</div>
<div class="t" style="left:361.0px;top:789.3px;font-size:18.5px;color:#666;font-weight:400;">2021/10</div>
<div class="t" style="left:361.0px;top:879.3px;font-size:18.5px;color:#666;font-weight:400;">2021/07</div>
<svg class="a" style="left:529px;top:560px;" width="16" height="16" viewBox="0 0 16 16"><path d="M0 0.5 h16 v15z" fill="#34b0b8"/></svg>
<div class="a" style="left:543px;top:561px;width:359px;height:38px;background:#34b0b8;border-radius:0 6px 0 0"></div>
<div class="t" style="left:685.5px;top:572.5px;font-size:20px;color:#fff;font-weight:700;">2022/06</div>
<div class="a" style="left:543px;top:599px;width:359px;height:40px;background:#e0e0e0;border-radius:0 0 6px 6px"></div>
<svg class="a" style="left:551px;top:606px;" width="25" height="19" viewBox="0 0 25 19"><path d="M0.5 2.5 a1.2 1.2 0 0 1 1.2 -1.2 h0.3 a1 1 0 0 1 1 -1 h4.5 a1 1 0 0 1 1 1 h14.3 a1.5 1.5 0 0 1 1.5 1.5 v13.8 a1.5 1.5 0 0 1 -1.5 1.5 h-21.1 a1.2 1.2 0 0 1 -1.2 -1.2z" fill="#1c86f7"/>
<rect x="4.4" y="4.8" width="2" height="10" fill="#fff"/><circle cx="14.6" cy="10" r="3.5" fill="none" stroke="#fff" stroke-width="2.2"/></svg>
<div class="t" style="left:584.0px;top:607.5px;font-size:18.8px;color:#1c86f7;font-weight:400;">GMT+08_2022-06-06_0100</div>
<svg class="a" style="left:847px;top:606px;" width="24" height="20" viewBox="0 0 24 20"><path d="M2.5 9 l6.5 6.5 l13 -12.5" fill="none" stroke="#1c86f7" stroke-width="2.4"/></svg>
<div class="a" style="left:1154px;top:434px;width:149px;height:6px;border:1px solid #c8c8c8;border-bottom:none;background:#fff"></div>
<div class="a" style="left:1122px;top:441px;width:213px;height:11px;border:1px solid #c0c0c0;border-bottom:none;background:#fff"></div>
<div class="a" style="left:1076px;top:452px;width:305px;height:16px;border:1px solid #b0b0b0;border-bottom:none;background:#fff"></div>
<div class="a" style="left:1010px;top:468px;width:437px;height:27px;border:1.5px solid #909090;border-bottom:none;background:#fcfcfc"></div>
<svg class="a" style="left:1026px;top:487px;transform:scale(.72);transform-origin:0 0" width="25" height="19" viewBox="0 0 25 19"><path d="M0.5 2.5 a1.2 1.2 0 0 1 1.2 -1.2 h0.3 a1 1 0 0 1 1 -1 h4.5 a1 1 0 0 1 1 1 h14.3 a1.5 1.5 0 0 1 1.5 1.5 v13.8 a1.5 1.5 0 0 1 -1.5 1.5 h-21.1 a1.2 1.2 0 0 1 -1.2 -1.2z" fill="#1c86f7"/>
<rect x="4.4" y="4.8" width="2" height="10" fill="#fff"/><circle cx="14.6" cy="10" r="3.5" fill="none" stroke="#fff" stroke-width="2.2"/></svg>
<div class="t" style="left:1052.0px;top:486.9px;font-size:13px;color:#555;font-weight:400;">GMT+08_2022-05-06_0100</div>
<div class="a" style="left:917px;top:491px;width:624px;height:463px;background:#fcfcfc;border:2px solid #8a8a8a"></div>
<svg class="a" style="left:932px;top:510px;" width="25" height="19" viewBox="0 0 25 19"><path d="M0.5 2.5 a1.2 1.2 0 0 1 1.2 -1.2 h0.3 a1 1 0 0 1 1 -1 h4.5 a1 1 0 0 1 1 1 h14.3 a1.5 1.5 0 0 1 1.5 1.5 v13.8 a1.5 1.5 0 0 1 -1.5 1.5 h-21.1 a1.2 1.2 0 0 1 -1.2 -1.2z" fill="#1c86f7"/>
<rect x="4.4" y="4.8" width="2" height="10" fill="#fff"/><circle cx="14.6" cy="10" r="3.5" fill="none" stroke="#fff" stroke-width="2.2"/></svg>
<div class="t" style="left:971.0px;top:513.9px;font-size:17.5px;color:#333;font-weight:400;">GMT+08_2022-06-06_0100</div>
<div class="a" style="left:920px;top:551px;width:618px;height:1px;background:#cfcfcf"></div>
<div class="a" style="left:920px;top:553px;width:618px;height:42px;background:#f4f4f4"></div>
<div class="a" style="left:933.5px;top:564px;width:19.0px;height:19px;border:1.6px solid #444;background:#fff"></div>
<svg class="a" style="left:975px;top:565px;" width="26" height="19" viewBox="0 0 26 19"><path d="M1 3 a1 1 0 0 1 1 -1 h7 l2.5 2.5 h12.5 a1 1 0 0 1 1 1 v12 a1 1 0 0 1 -1 1 h-22 a1 1 0 0 1 -1 -1z" fill="#ffab00"/></svg>
<div class="t" style="left:1023.0px;top:564.5px;font-size:19.4px;color:#333;font-weight:400;">.@app_center</div>
<div class="a" style="left:920px;top:595px;width:618px;height:42px;background:#fbfbfb"></div>
<div class="a" style="left:933.5px;top:606px;width:19.0px;height:19px;border:1.6px solid #444;background:#fff"></div>
<svg class="a" style="left:975px;top:607px;" width="26" height="19" viewBox="0 0 26 19"><path d="M1 3 a1 1 0 0 1 1 -1 h7 l2.5 2.5 h12.5 a1 1 0 0 1 1 1 v12 a1 1 0 0 1 -1 1 h-22 a1 1 0 0 1 -1 -1z" fill="#ffab00"/></svg>
<div class="t" style="left:1023.0px;top:606.5px;font-size:19.4px;color:#333;font-weight:400;">.@backup_code_signing</div>
<div class="a" style="left:920px;top:637px;width:618px;height:42px;background:#f4f4f4"></div>
<div class="a" style="left:933.5px;top:648px;width:19.0px;height:19px;border:1.6px solid #444;background:#fff"></div>
<svg class="a" style="left:975px;top:649px;" width="26" height="19" viewBox="0 0 26 19"><path d="M1 3 a1 1 0 0 1 1 -1 h7 l2.5 2.5 h12.5 a1 1 0 0 1 1 1 v12 a1 1 0 0 1 -1 1 h-22 a1 1 0 0 1 -1 -1z" fill="#ffab00"/></svg>
<div class="t" style="left:1023.0px;top:648.5px;font-size:19.4px;color:#333;font-weight:400;">.@backup_config</div>
<div class="a" style="left:920px;top:679px;width:618px;height:42px;background:#fbfbfb"></div>
<div class="a" style="left:933.5px;top:690px;width:19.0px;height:19px;border:1.6px solid #444;background:#fff"></div>
<svg class="a" style="left:975px;top:691px;" width="26" height="19" viewBox="0 0 26 19"><path d="M1 3 a1 1 0 0 1 1 -1 h7 l2.5 2.5 h12.5 a1 1 0 0 1 1 1 v12 a1 1 0 0 1 -1 1 h-22 a1 1 0 0 1 -1 -1z" fill="#ffab00"/></svg>
<div class="t" style="left:1023.0px;top:690.5px;font-size:19.4px;color:#333;font-weight:400;">.@backup_qbox</div>
<div class="a" style="left:920px;top:721px;width:618px;height:42px;background:#f4f4f4"></div>
<div class="a" style="left:933.5px;top:732px;width:19.0px;height:19px;border:1.6px solid #444;background:#fff"></div>
<svg class="a" style="left:975px;top:733px;" width="26" height="19" viewBox="0 0 26 19"><path d="M1 3 a1 1 0 0 1 1 -1 h7 l2.5 2.5 h12.5 a1 1 0 0 1 1 1 v12 a1 1 0 0 1 -1 1 h-22 a1 1 0 0 1 -1 -1z" fill="#ffab00"/></svg>
<div class="t" style="left:1023.0px;top:732.5px;font-size:19.4px;color:#333;font-weight:400;">.@qmonitor</div>
<div class="a" style="left:920px;top:763px;width:618px;height:42px;background:#fbfbfb"></div>
<div class="a" style="left:933.5px;top:774px;width:19.0px;height:19px;border:1.6px solid #444;background:#fff"></div>
<svg class="a" style="left:975px;top:775px;" width="26" height="19" viewBox="0 0 26 19"><path d="M1 3 a1 1 0 0 1 1 -1 h7 l2.5 2.5 h12.5 a1 1 0 0 1 1 1 v12 a1 1 0 0 1 -1 1 h-22 a1 1 0 0 1 -1 -1z" fill="#ffab00"/></svg>
<div class="t" style="left:1023.0px;top:774.5px;font-size:19.4px;color:#333;font-weight:400;">.@upload_cache</div>
<div class="a" style="left:920px;top:805px;width:618px;height:42px;background:#f4f4f4"></div>
<div class="a" style="left:933.5px;top:816px;width:19.0px;height:19px;border:1.6px solid #444;background:#fff"></div>
<svg class="a" style="left:975px;top:817px;" width="26" height="19" viewBox="0 0 26 19"><path d="M1 3 a1 1 0 0 1 1 -1 h7 l2.5 2.5 h12.5 a1 1 0 0 1 1 1 v12 a1 1 0 0 1 -1 1 h-22 a1 1 0 0 1 -1 -1z" fill="#ffab00"/></svg>
<div class="t" style="left:1023.0px;top:816.5px;font-size:19.4px;color:#333;font-weight:400;">.antivirus</div>
<div class="a" style="left:920px;top:847px;width:618px;height:42px;background:#fbfbfb"></div>
<div class="a" style="left:933.5px;top:858px;width:19.0px;height:19px;border:1.6px solid #444;background:#fff"></div>
<svg class="a" style="left:975px;top:859px;" width="26" height="19" viewBox="0 0 26 19"><path d="M1 3 a1 1 0 0 1 1 -1 h7 l2.5 2.5 h12.5 a1 1 0 0 1 1 1 v12 a1 1 0 0 1 -1 1 h-22 a1 1 0 0 1 -1 -1z" fill="#ffab00"/></svg>
<div class="t" style="left:1023.0px;top:858.5px;font-size:19.4px;color:#333;font-weight:400;">.codesigning</div>
<div class="a" style="left:920px;top:888px;width:618px;height:7px;background:#fbfbfb"></div>
<div class="a" style="left:920px;top:895px;width:618px;height:1px;background:#d0d0d0"></div>
<svg class="a" style="left:938px;top:914px;" width="24" height="18" viewBox="0 0 24 18"><g fill="#d2d2d2"><rect x="2" y="2" width="2.5" height="14"/><path d="M12 2 v14 l-7 -7z M19.5 2 v14 l-7 -7z"/></g></svg>
<svg class="a" style="left:974px;top:914px;" width="18" height="18" viewBox="0 0 18 18"><path d="M14 2 v14 l-9 -7z" fill="#d2d2d2"/></svg>
<div class="a" style="left:1015px;top:913px;width:2px;height:20px;background:#b0b0b0"></div>
<div class="a" style="left:1034px;top:904px;width:78px;height:39px;border:1px solid #dcdcdc;background:#fff"></div>
<div class="t" style="left:1050.0px;top:914.7px;font-size:18px;color:#1c86f7;font-weight:400;">1</div>
<div class="t" style="left:1115.0px;top:914.7px;font-size:18px;color:#555;font-weight:400;">/1</div>
<div class="a" style="left:1152px;top:913px;width:2px;height:20px;background:#b0b0b0"></div>
<svg class="a" style="left:1178px;top:914px;" width="18" height="18" viewBox="0 0 18 18"><path d="M4 2 v14 l9 -7z" fill="#d2d2d2"/></svg>
<svg class="a" style="left:1208px;top:914px;" width="24" height="18" viewBox="0 0 24 18"><g fill="#d2d2d2"><path d="M4 2 v14 l7 -7z M11.5 2 v14 l7 -7z"/><rect x="19" y="2" width="2.5" height="14"/></g></svg>
<div class="a" style="left:1254px;top:913px;width:2px;height:20px;background:#b0b0b0"></div>
<div class="t" style="left:1274.0px;top:914.7px;font-size:18px;color:#555;font-weight:400;">Show</div>
<div class="a" style="left:1327px;top:904px;width:78px;height:39px;border:1.8px solid #111;background:#fff"></div>
<div class="t" style="left:1343.0px;top:914.7px;font-size:18px;color:#1c86f7;font-weight:400;">50</div>
<svg class="a" style="left:1374px;top:920px;" width="16" height="10" viewBox="0 0 16 10"><path d="M1 1 h13 l-6.5 7.5z" fill="#333"/></svg>
<div class="t" style="left:1412.0px;top:914.7px;font-size:18px;color:#555;font-weight:400;">Item(s)</div>
<div class="t" style="left:1580.0px;top:469.3px;font-size:19.5px;color:#555;font-weight:400;">Taken:</div>
<div class="t" style="left:1730.0px;top:455.4px;font-size:19px;color:#333;font-weight:400;">2022-06-06</div>
<div class="t" style="left:1730.0px;top:481.8px;font-size:19px;color:#333;font-weight:400;">01:00:02</div>
<div class="t" style="left:1580.0px;top:522.9px;font-size:19.5px;color:#555;font-weight:400;">Replicated:</div>
<div class="t" style="left:1730.0px;top:523.4px;font-size:19px;color:#333;font-weight:400;">No</div>
<div class="t" style="left:1580.0px;top:558.5px;font-size:19.5px;color:#555;font-weight:400;">Retention</div>
<div class="t" style="left:1580.0px;top:585.4px;font-size:19.5px;color:#555;font-weight:400;">Policy:</div>
<div class="t" style="left:1730.0px;top:571.4px;font-size:19.8px;color:#1e2ee6;font-weight:400;text-decoration-thickness:1px"><u>Smart Versioning</u></div>
<div class="t" style="left:1580.0px;top:659.9px;font-size:19.5px;color:#555;font-weight:400;">Status:</div>
<svg class="a" style="left:1733px;top:655px;" width="36" height="26" viewBox="0 0 36 26"><path d="M3 13 l9 9.5 l20 -19" fill="none" stroke="#2ca02c" stroke-width="3.6"/></svg>
<div class="t" style="left:1777.0px;top:659.9px;font-size:19.5px;color:#2ca02c;font-weight:400;">Ready</div>
<div class="t" style="left:1580.0px;top:712.5px;font-size:19.5px;color:#555;font-weight:400;">Capacity:</div>
<div class="t" style="left:1730.0px;top:713.0px;font-size:19px;color:#333;font-weight:400;">16.35 GB</div>
<div class="t" style="left:1580.0px;top:809.4px;font-size:18.5px;color:#555;font-weight:400;">Description:</div>
<svg class="a" style="left:1691px;top:801px;" width="30" height="28" viewBox="0 0 30 28"><path d="M13 5 h-10 v20 h20 v-9" fill="none" stroke="#555" stroke-width="2"/>
<path d="M10 19 l.8 -4.5 l11 -11 a1.8 1.8 0 0 1 2.6 0 l1 1 a1.8 1.8 0 0 1 0 2.6 l-11 11z" fill="none" stroke="#555" stroke-width="2" stroke-linejoin="round"/></svg>
<div class="t" style="left:1597.0px;top:846.3px;font-size:18.3px;color:#333;font-weight:400;">No description</div>
<div class="a" style="left:324px;top:991px;width:1596px;height:1px;background:#d6d6d6"></div>
<div class="a" style="left:324px;top:992px;width:1596px;height:75px;background:#f9f9f9"></div>
<div class="a" style="left:1148px;top:1007px;width:186px;height:45px;background:#1a92f4;border-radius:23px"></div>
<div class="t" style="left:1197.0px;top:1019.6px;font-size:20px;color:#fff;font-weight:700;font-weight:600">Restore</div>
<svg class="a" style="left:1283px;top:1025px;" width="14" height="10" viewBox="0 0 14 10"><path d="M0.5 0.5 h13 l-6.5 8z" fill="#fff"/></svg>
<div class="a" style="left:1371px;top:1007px;width:186px;height:45px;background:#1a92f4;border-radius:23px"></div>
<div class="t" style="left:1438.0px;top:1019.6px;font-size:20px;color:#fff;font-weight:700;">Clone</div>
<div class="a" style="left:1595px;top:1007px;width:304px;height:45px;background:#1a92f4;border-radius:23px"></div>
<div class="t" style="left:1633.0px;top:1019.9px;font-size:19.6px;color:#fff;font-weight:700;">Revert volume snapshot</div>
</body></html>
